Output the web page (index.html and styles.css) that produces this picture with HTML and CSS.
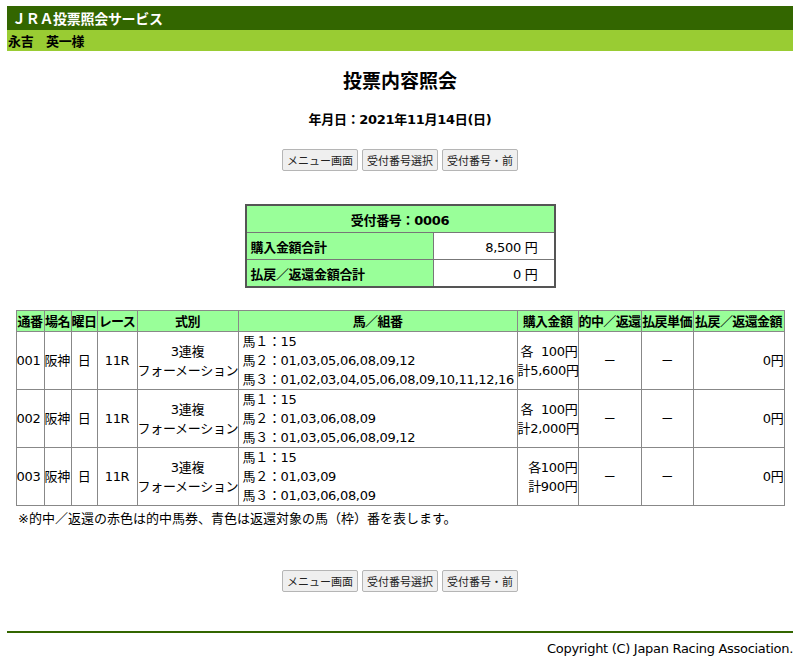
FILE: index.html
```html
<!DOCTYPE html>
<html lang="ja">
<head>
<meta charset="utf-8">
<title>投票内容照会</title>
<link rel="stylesheet" href="styles.css">
</head>
<body>
<div class="top">ＪＲＡ投票照会サービス</div>
<div class="user">永吉　英一様</div>
<h1 class="title">投票内容照会</h1>
<p class="date">年月日：2021年11月14日(日)</p>
<div class="btns">
  <button class="btn">メニュー画面</button>
  <button class="btn">受付番号選択</button>
  <button class="btn">受付番号・前</button>
</div>
<table class="sum">
  <tr><th colspan="2" class="sum-head">受付番号：0006</th></tr>
  <tr><th class="sum-label">購入金額合計</th><td class="sum-val">8,500 円</td></tr>
  <tr><th class="sum-label">払戻／返還金額合計</th><td class="sum-val">0 円</td></tr>
</table>
<table class="main">
  <colgroup>
    <col class="c1"><col class="c2"><col class="c3"><col class="c4"><col class="c5">
    <col class="c6"><col class="c7"><col class="c8"><col class="c9"><col class="c10">
  </colgroup>
  <tr class="hd">
    <th>通番</th><th>場名</th><th>曜日</th><th>レース</th><th>式別</th><th>馬／組番</th><th>購入金額</th><th>的中／返還</th><th>払戻単価</th><th>払戻／返還金額</th>
  </tr>
  <tr>
    <td>001</td><td>阪神</td><td class="c">日</td><td class="c">11R</td>
    <td class="c">3連複<br>フォーメーション</td>
    <td class="horse">馬１：15<br>馬２：01,03,05,06,08,09,12<br>馬３：01,02,03,04,05,06,08,09,10,11,12,16</td>
    <td class="r">各&nbsp; 100円<br>計5,600円</td><td class="c">－</td><td class="c">－</td><td class="r">0円</td>
  </tr>
  <tr>
    <td>002</td><td>阪神</td><td class="c">日</td><td class="c">11R</td>
    <td class="c">3連複<br>フォーメーション</td>
    <td class="horse">馬１：15<br>馬２：01,03,06,08,09<br>馬３：01,03,05,06,08,09,12</td>
    <td class="r">各&nbsp; 100円<br>計2,000円</td><td class="c">－</td><td class="c">－</td><td class="r">0円</td>
  </tr>
  <tr>
    <td>003</td><td>阪神</td><td class="c">日</td><td class="c">11R</td>
    <td class="c">3連複<br>フォーメーション</td>
    <td class="horse">馬１：15<br>馬２：01,03,09<br>馬３：01,03,06,08,09</td>
    <td class="r">各100円<br>計900円</td><td class="c">－</td><td class="c">－</td><td class="r">0円</td>
  </tr>
</table>
<p class="note">※的中／返還の赤色は的中馬券、青色は返還対象の馬（枠）番を表します。</p>
<div class="btns btns-bottom">
  <button class="btn">メニュー画面</button>
  <button class="btn">受付番号選択</button>
  <button class="btn">受付番号・前</button>
</div>
<div class="foot">Copyright (C) Japan Racing Association.</div>
</body>
</html>
```
FILE: styles.css
```css
body {
  margin: 6px 7px;
  font-family: "DejaVu Sans", "Noto Sans CJK JP", sans-serif;
  font-size: 13px;
  letter-spacing: -0.3px;
  color: #000;
  background: #fff;
}
.top {
  background: #336600;
  color: #fff;
  font-weight: bold;
  font-size: 14px;
  height: 24px;
  line-height: 24px;
  padding-left: 5px;
  font-family: "Noto Sans CJK JP", sans-serif;
}
.user {
  background: #99cc33;
  font-weight: bold;
  height: 21px;
  line-height: 21px;
  padding-left: 1px;
  font-family: "Noto Sans CJK JP", sans-serif;
}
.title {
  margin: 17px 0 0;
  text-align: center;
  font-size: 19px;
  line-height: 24px;
  letter-spacing: 0;
  font-family: "Noto Sans CJK JP", sans-serif;
}
.date {
  margin: 19px 0 0;
  text-align: center;
  font-weight: bold;
  line-height: 18px;
}
.btns {
  margin-top: 20px;
  display: flex;
  justify-content: center;
  gap: 4px;
}
.btn {
  font-family: "Noto Sans CJK JP", sans-serif;
  font-size: 11px;
  letter-spacing: 0;
  height: 22px;
  padding: 0 4px;
  white-space: nowrap;
  background: #efefef;
  border: 1px solid #b5b5b5;
  border-radius: 2px;
  color: #222;
}
.sum {
  margin: 33px auto 0;
  border-collapse: collapse;
  border: 2px solid #555;
  width: 311px;
}
.sum th, .sum td {
  border: 1px solid #777;
  height: 26px;
  padding: 0 4px;
}
.sum-head {
  background: #99ff99;
  text-align: center;
}
.sum-label {
  background: #99ff99;
  text-align: left;
  width: 178px;
}
.sum-val {
  text-align: right;
  padding-right: 16px !important;
}
.main {
  margin: 22px auto 0;
  border-collapse: collapse;
  width: 768px;
  table-layout: fixed;
  border: 1px solid #666;
}
.main th, .main td {
  border: 1px solid #888;
  padding: 0;
  line-height: 19px;
  white-space: nowrap;
}
.main .hd th {
  background: #99ff99;
  height: 20px;
  font-weight: bold;
  letter-spacing: -0.6px;
}
.main td { height: 56px; }
.c1 { width: 28px; }
.c2 { width: 27px; }
.c3 { width: 26px; }
.c4 { width: 40px; }
.c5 { width: 101px; }
.c6 { width: 279px; }
.c7 { width: 61px; }
.c8 { width: 63px; }
.c9 { width: 52px; }
.c10 { width: 91px; }
.c { text-align: center; }
.r { text-align: right; }
.horse { padding-left: 4px !important; }
.note {
  margin: 4px 0 0 11px;
  line-height: 18px;
  letter-spacing: 0;
}
.btns-bottom { margin-top: 42px; }
.foot {
  margin-top: 39px;
  border-top: 2px solid #336600;
  text-align: right;
  padding-top: 8px;
  line-height: 16px;
}
```
